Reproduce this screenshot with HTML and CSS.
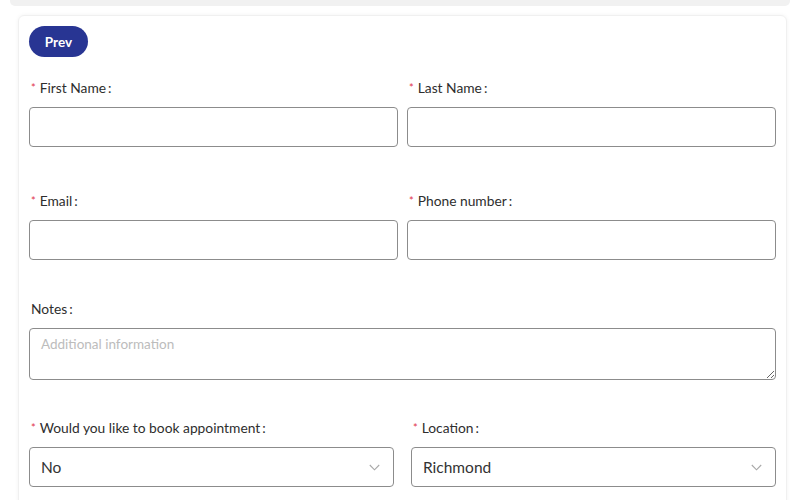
FILE: index.html
```html
<!DOCTYPE html>
<html>
<head>
<meta charset="utf-8">
<link rel="stylesheet" href="styles.css">
</head>
<body>
<div class="topbar"></div>
<div class="card">
  <button class="btn-prev">Prev</button>

  <div class="row row-first cols-2">
    <div class="field">
      <label class="label"><span class="req">*</span>First Name<span class="colon">:</span></label>
      <input class="input" type="text">
    </div>
    <div class="field">
      <label class="label"><span class="req">*</span>Last Name<span class="colon">:</span></label>
      <input class="input" type="text">
    </div>
  </div>

  <div class="row row-second cols-2">
    <div class="field">
      <label class="label"><span class="req">*</span>Email<span class="colon">:</span></label>
      <input class="input" type="text">
    </div>
    <div class="field">
      <label class="label"><span class="req">*</span>Phone number<span class="colon">:</span></label>
      <input class="input" type="text">
    </div>
  </div>

  <div class="row row-notes">
    <div class="field">
      <label class="label">Notes<span class="colon">:</span></label>
      <textarea class="textarea" placeholder="Additional information"></textarea>
    </div>
  </div>

  <div class="row row-last cols-2 wide-gap">
    <div class="field">
      <label class="label"><span class="req">*</span>Would you like to book appointment<span class="colon">:</span></label>
      <div class="select">
        <span class="select-value">No</span>
        <svg class="chevron" width="11" height="7" viewBox="0 0 11 7"><path d="M0.8 1 L5.5 5.8 L10.2 1" fill="none" stroke="#a8a8a8" stroke-width="1.1"/></svg>
      </div>
    </div>
    <div class="field">
      <label class="label"><span class="req">*</span>Location<span class="colon">:</span></label>
      <div class="select">
        <span class="select-value">Richmond</span>
        <svg class="chevron" width="11" height="7" viewBox="0 0 11 7"><path d="M0.8 1 L5.5 5.8 L10.2 1" fill="none" stroke="#a8a8a8" stroke-width="1.1"/></svg>
      </div>
    </div>
  </div>
</div>
</body>
</html>
```

FILE: styles.css
```css
* { box-sizing: border-box; }

html, body {
  margin: 0;
  padding: 0;
  background: #ffffff;
  font-family: Lato, "Open Sans", "Noto Sans", sans-serif;
  color: #333333;
  overflow: hidden;
}

.topbar {
  height: 6px;
  margin: 0 10px;
  background: #f1f1f1;
  border-radius: 0 0 5px 5px;
}

.card {
  margin: 9px 13px 0 18px;
  padding: 10px 10px 20px 10px;
  border: 1px solid #f0f0f0;
  border-radius: 6px;
  box-shadow: 0 0 4px rgba(0, 0, 0, 0.05);
  min-height: 520px;
}

.btn-prev {
  display: block;
  width: 59px;
  height: 31px;
  border: none;
  border-radius: 16px;
  background: #283593;
  color: #ffffff;
  font-family: Lato, "Open Sans", sans-serif;
  font-weight: 700;
  font-size: 13.5px;
  padding: 0;
  cursor: pointer;
}

.row { display: grid; }
.cols-2 { grid-template-columns: 1fr 1fr; column-gap: 9px; }
.wide-gap { column-gap: 17px; }

.row-first { margin-top: 21px; }
.row-second { margin-top: 44px; }
.row-notes { margin-top: 39px; }
.row-last { margin-top: 38px; }

.field {
  display: flex;
  flex-direction: column;
}

.label {
  display: block;
  height: 20px;
  line-height: 20px;
  font-size: 13.8px;
  color: #2e2e2e;
  margin-bottom: 9px;
  padding-left: 2px;
}

.req {
  color: #e0334a;
  font-size: 11px;
  margin-right: 4px;
  vertical-align: 1px;
}

.colon {
  margin-left: 2px;
}

.input {
  height: 40px;
  border: 1px solid #8c8c8c;
  border-radius: 4px;
  background: #ffffff;
  padding: 0 11px;
  font-size: 15px;
  font-family: inherit;
  outline: none;
}

.textarea {
  display: block;
  height: 52px;
  border: 1px solid #8c8c8c;
  border-radius: 4px;
  background: #ffffff;
  padding: 7px 11px;
  font-size: 13.5px;
  font-family: inherit;
  color: #333333;
  resize: vertical;
  outline: none;
}

.textarea::placeholder { color: #bcbcbc; }

.select {
  height: 40px;
  border: 1px solid #8c8c8c;
  border-radius: 4px;
  background: #ffffff;
  display: flex;
  align-items: center;
  justify-content: space-between;
  padding: 0 13px 0 11px;
}

.select-value {
  font-size: 15.5px;
  color: #333333;
}

.chevron { display: block; }
```
